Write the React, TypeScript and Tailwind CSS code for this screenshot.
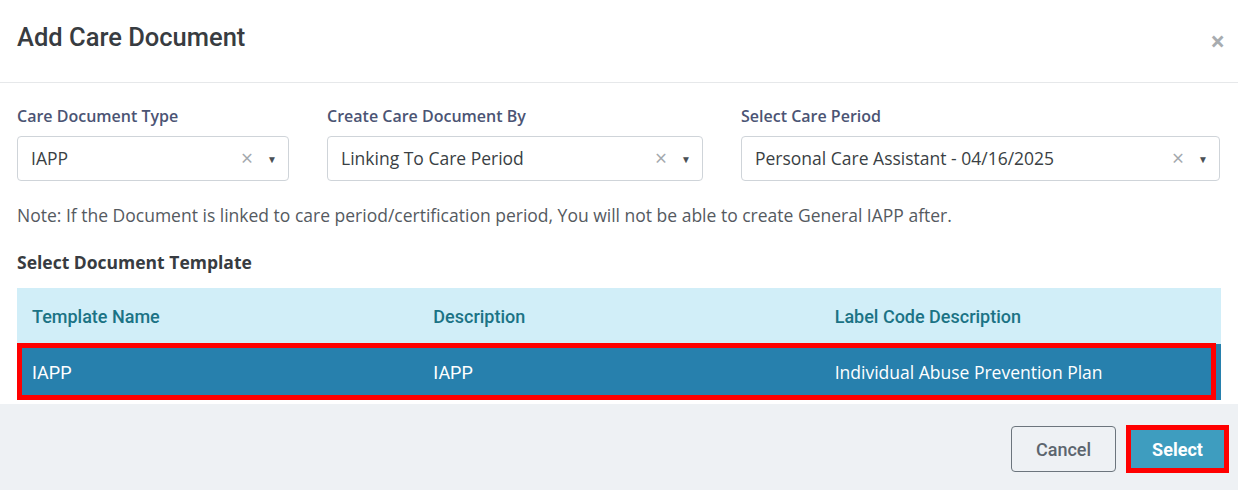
import React from 'react';

const fieldClass =
  'h-[45px] flex items-center rounded border border-[#cfd4d9] bg-white pl-[13px] pr-[11px] text-[17.5px] text-[#3a3f44]';

const SelectBox: React.FC<{ value: string }> = ({ value }) => (
  <div className={fieldClass}>
    <span className="flex-1 truncate">{value}</span>
    <span className="text-[21px] leading-none text-[#a3a8ad] mr-[14px]">×</span>
    <span className="text-[10px] leading-none text-[#4a4f55]">▼</span>
  </div>
);

const labelClass = 'block text-[16px] font-semibold text-[#4b5474] leading-[21px] mb-[9px]';

const App: React.FC = () => {
  return (
    <div className="w-[1238px] h-[490px] bg-white flex flex-col font-['Open_Sans',sans-serif]">
      {/* Header */}
      <header className="h-[83px] border-b border-[#e6e8ea] flex items-center justify-between pl-[17px] pr-[13px]">
        <h1 className="font-['Roboto',sans-serif] font-medium text-[25.5px] text-[#383c41] -mt-[7px]">
          Add Care Document
        </h1>
        <span className="text-[#a8acb0] text-[26px] font-bold leading-none">×</span>
      </header>

      {/* Body */}
      <main className="flex-1 px-[17px] pt-[23px]">
        <div className="flex gap-[38px]">
          <div className="w-[272px]">
            <label className={labelClass}>Care Document Type</label>
            <SelectBox value="IAPP" />
          </div>
          <div className="w-[376px]">
            <label className={labelClass}>Create Care Document By</label>
            <SelectBox value="Linking To Care Period" />
          </div>
          <div className="w-[479px]">
            <label className={labelClass}>Select Care Period</label>
            <SelectBox value="Personal Care Assistant - 04/16/2025" />
          </div>
        </div>

        <p className="mt-[22px] text-[17.5px] leading-[24px] text-[#555a5f]">
          Note: If the Document is linked to care period/certification period, You will not be able to create General IAPP after.
        </p>

        <h2 className="mt-[23px] text-[17.5px] leading-[24px] font-bold text-[#383c41]">Select Document Template</h2>

        {/* Table */}
        <div className="mt-[14px] w-[1204px]">
          <div className="grid grid-cols-3 h-[56px] items-center bg-[#d1eef8] font-['Roboto',sans-serif] font-medium text-[18px] text-[#1b7385]">
            <div className="pl-[15px]">Template Name</div>
            <div className="pl-[15px]">Description</div>
            <div className="pl-[15px]">Label Code Description</div>
          </div>
          <div className="relative grid grid-cols-3 h-[56px] items-center bg-[#2780ad] text-white text-[17.5px]">
            <div className="pl-[15px] font-['Roboto',sans-serif] text-[18px]">IAPP</div>
            <div className="pl-[15px] font-['Roboto',sans-serif] text-[18px]">IAPP</div>
            <div className="pl-[15px]">Individual Abuse Prevention Plan</div>
            <div className="absolute left-0 right-[5px] -top-[1px] bottom-0 border-[5px] border-[#ff0000] pointer-events-none" />
          </div>
        </div>
      </main>

      {/* Footer */}
      <footer className="h-[86px] bg-[#eef1f4] flex items-center justify-end gap-[10px] pr-[9px] pt-[4px] font-['Roboto',sans-serif]">
        <button className="w-[105px] h-[46px] rounded border border-[#6c757d] text-[18px] text-[#5c656e] font-medium">
          Cancel
        </button>
        <div className="border-[5px] border-[#ff0000] w-[103px] h-[48px]">
          <button className="w-full h-full bg-[#3e9dbf] text-white text-[18px] font-bold">Select</button>
        </div>
      </footer>
    </div>
  );
};

export default App;
